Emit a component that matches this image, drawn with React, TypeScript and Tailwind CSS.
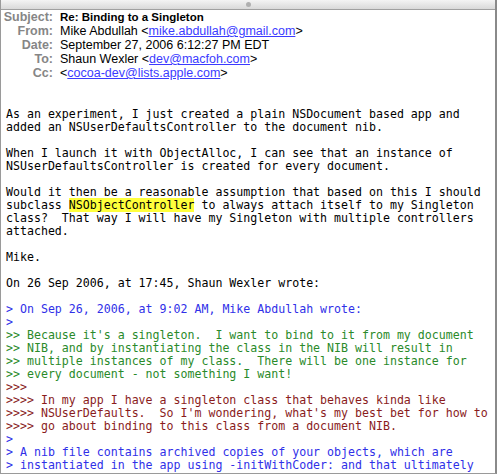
const header = [
  {
    label: "Subject:",
    value: <span className="font-bold text-[11.5px]">Re: Binding to a Singleton</span>,
  },
  {
    label: "From:",
    value: (
      <>
        Mike Abdullah &lt;<a className="text-[#3b3bff] underline">mike.abdullah@gmail.com</a>&gt;
      </>
    ),
  },
  { label: "Date:", value: <>September 27, 2006 6:12:27 PM EDT</> },
  {
    label: "To:",
    value: (
      <>
        Shaun Wexler &lt;<a className="text-[#3b3bff] underline">dev@macfoh.com</a>&gt;
      </>
    ),
  },
  {
    label: "Cc:",
    value: (
      <>
        &lt;<a className="text-[#3b3bff] underline">cocoa-dev@lists.apple.com</a>&gt;
      </>
    ),
  },
];

type Line = { text: string; color?: string };

const quoted: Line[] = [
  { text: "> On Sep 26, 2006, at 9:02 AM, Mike Abdullah wrote:", color: "text-[#3030e8]" },
  { text: ">", color: "text-[#3030e8]" },
  { text: ">> Because it's a singleton.  I want to bind to it from my document", color: "text-[#2a8a2a]" },
  { text: ">> NIB, and by instantiating the class in the NIB will result in", color: "text-[#2a8a2a]" },
  { text: ">> multiple instances of my class.  There will be one instance for", color: "text-[#2a8a2a]" },
  { text: ">> every document - not something I want!", color: "text-[#2a8a2a]" },
  { text: ">>>", color: "text-[#8a1c1c]" },
  { text: ">>>> In my app I have a singleton class that behaves kinda like", color: "text-[#8a1c1c]" },
  { text: ">>>> NSUserDefaults.  So I'm wondering, what's my best bet for how to", color: "text-[#8a1c1c]" },
  { text: ">>>> go about binding to this class from a document NIB.", color: "text-[#8a1c1c]" },
  { text: ">", color: "text-[#3030e8]" },
  { text: "> A nib file contains archived copies of your objects, which are", color: "text-[#3030e8]" },
  { text: "> instantiated in the app using -initWithCoder: and that ultimately", color: "text-[#3030e8]" },
];

export default function App() {
  return (
    <div className="w-[497px] h-[474px] overflow-hidden bg-white border-l border-l-[#9a9a9a] border-r-2 border-r-[#8a8a8a] border-b border-b-[#9a9a9a] flex flex-col">
      <div className="h-[10px] shrink-0 bg-gradient-to-b from-[#f4f4f4] to-[#d9d9d9] border-b border-b-[#a0a0a0] flex justify-center items-center">
        <div className="w-[5px] h-[5px] rounded-full bg-[#b0b0b0]" />
      </div>
      <div
        className="grid grid-cols-[52px_1fr] gap-x-[7px] text-[12.5px] leading-[14px] text-black"
        style={{ fontFamily: '"Liberation Sans", Arial, sans-serif' }}
      >
        {header.map((h) => (
          <div key={h.label} className="contents">
            <div className="text-right font-bold text-[12.5px] text-[#868686]">{h.label}</div>
            <div className="whitespace-nowrap">{h.value}</div>
          </div>
        ))}
      </div>
      <div
        className="pt-[28px] pl-[5px] text-[11.6px] leading-[13px] text-black whitespace-pre"
        style={{ fontFamily: '"DejaVu Sans Mono", monospace' }}
      >
        <div>As an experiment, I just created a plain NSDocument based app and</div>
        <div>added an NSUserDefaultsController to the document nib.</div>
        <div>&nbsp;</div>
        <div>When I launch it with ObjectAlloc, I can see that an instance of</div>
        <div>NSUserDefaultsController is created for every document.</div>
        <div>&nbsp;</div>
        <div>Would it then be a reasonable assumption that based on this I should</div>
        <div>
          subclass <span className="bg-[#ffff3c]">NSObjectController</span> to always attach itself to my Singleton
        </div>
        <div>class?  That way I will have my Singleton with multiple controllers</div>
        <div>attached.</div>
        <div>&nbsp;</div>
        <div>Mike.</div>
        <div>&nbsp;</div>
        <div>On 26 Sep 2006, at 17:45, Shaun Wexler wrote:</div>
        <div>&nbsp;</div>
        {quoted.map((l, i) => (
          <div key={i} className={l.color}>
            {l.text}
          </div>
        ))}
      </div>
    </div>
  );
}
